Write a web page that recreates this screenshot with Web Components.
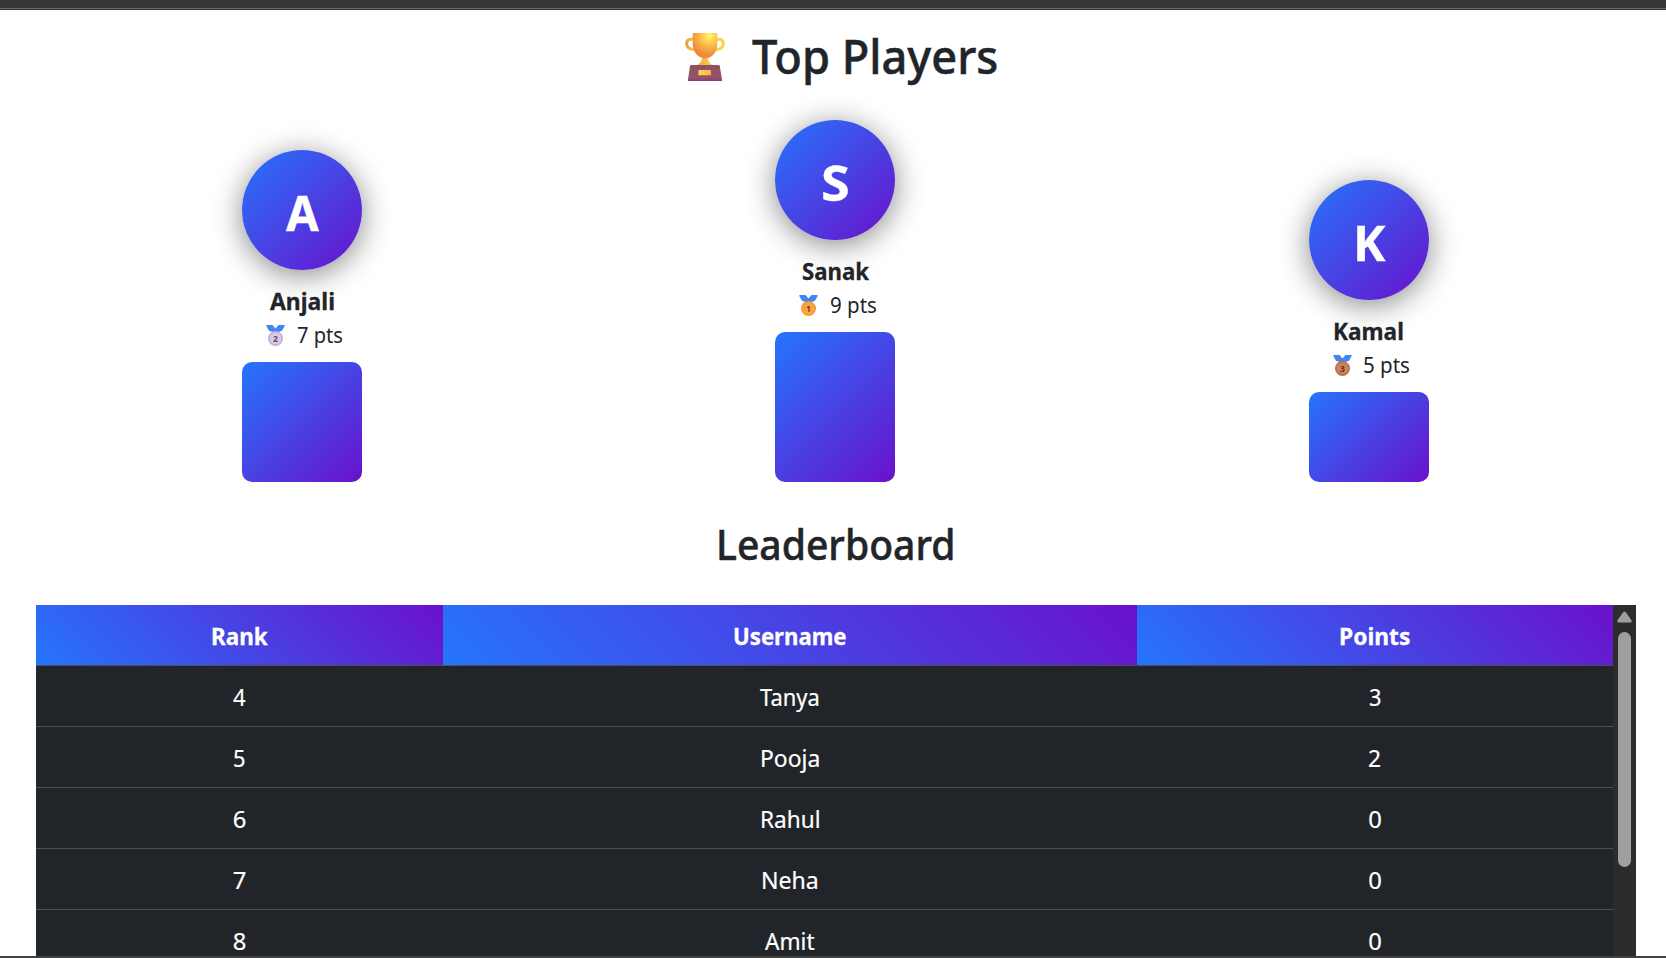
<!DOCTYPE html>
<html lang="en">
<head>
<meta charset="utf-8">
<title>Top Players</title>
<style>
html,body{margin:0;height:100%;overflow:hidden;background:#fff}
body{font-family:"Noto Sans","Open Sans",sans-serif;color:#212529}
</style>
</head>
<body>
<leader-app></leader-app>
<script>
const define = (name, html, setup) => {
  const t = document.createElement('template');
  t.innerHTML = html;
  customElements.define(name, class extends HTMLElement {
    constructor() {
      super();
      this.attachShadow({ mode: 'open' }).append(t.content.cloneNode(true));
    }
    connectedCallback() { if (setup) setup(this, this.shadowRoot); }
  });
};

// Text condensed horizontally so that its inked width equals the "w" attribute.
define('fit-text', `<style>
:host{display:inline-block;white-space:nowrap;text-align:left}
span{display:inline-block;transform-origin:0 50%}
</style><span><slot></slot></span>`, (el, root) => {
  const span = root.querySelector('span'), cs = getComputedStyle(el);
  const ctx = document.createElement('canvas').getContext('2d');
  ctx.font = `${cs.fontWeight} ${cs.fontSize} ${cs.fontFamily}`;
  const m = ctx.measureText(el.textContent);
  const k = Number(el.getAttribute('w')) / (m.actualBoundingBoxRight + m.actualBoundingBoxLeft);
  el.style.width = m.width * k + 'px';
  span.style.transform = `scaleX(${k})`;
});

define('trophy-icon', `<style>:host{display:block;width:40px;height:48px}svg{display:block}</style>
<svg width="40" height="48" viewBox="0 0 40 48">
<defs>
<radialGradient id="c" cx=".68" cy=".12" r=".95"><stop offset="0" stop-color="#fff76b"/><stop offset=".4" stop-color="#fbbc48"/><stop offset=".8" stop-color="#ed8b3b"/></radialGradient>
<linearGradient id="l"><stop offset="0" stop-color="#eda03a"/><stop offset="1" stop-color="#ffd84f"/></linearGradient>
<linearGradient id="b" x2="0" y2="1"><stop offset="0" stop-color="#8c5163"/><stop offset=".75" stop-color="#965367"/><stop offset="1" stop-color="#8a3f79"/></linearGradient>
<linearGradient id="p"><stop offset="0" stop-color="#ffd65a"/><stop offset="1" stop-color="#f6b443"/></linearGradient>
</defs>
<path d="M10 7.200C5 4.700 1.500 7 1.700 11c.3 4 4.500 6.300 9.500 5.700" fill="none" stroke="url(#l)" stroke-width="3"/>
<path d="M30 7.200c5-2.500 8.500-.200 8.300 3.800-.3 4-4.500 6.300-9.500 5.700" fill="none" stroke="#ffce4a" stroke-width="3"/>
<path d="M17.300 23h5.400c0 5.500 2.300 7.500 6 9.500H11.500c3.500-2 5.800-4 5.800-9.500z" fill="url(#l)"/>
<path d="M8.500 0h23q.800 0 .8.800V11c0 8-5.300 14.300-12.200 14.300S7.700 19 7.700 11V.8Q7.700 0 8.500 0z" fill="url(#c)"/>
<path d="M6.300 32h27.200q1 0 1.300 1l2.400 15H2.800L5 33q.200-1 1.300-1z" fill="url(#b)"/>
<rect x="13.500" y="37" width="12.500" height="5.300" rx=".5" fill="url(#p)"/>
</svg>`);

define('medal-icon', `<style>:host{display:block;width:19px;height:21px}svg{display:block}
text{font:700 8.500px "Noto Sans",sans-serif;text-anchor:middle}</style>
<svg width="19" height="21" viewBox="0 0 19 21">
<path d="M1 0h6.200l2.300 2.300L11.800 0H18q1 0 .7 1L16 5.700 12.500 7h-6L3 5.700.3 1Q0 0 1 0z" fill="#3f86ee"/>
<path d="M6.500 0h6L9.500 3.400z" fill="#fff"/>
<circle class="rim" cx="9.500" cy="13.500" r="7.500"/><circle class="face" cx="9.500" cy="13.300" r="5.900"/>
<text x="9.500" y="16.600"></text></svg>`, (el, root) => {
  const place = el.getAttribute('place');
  const [rim, face, ink] = { 1: ['#f39a3c', '#fba53b', '#6c3741'], 2: ['#c3aed4', '#dac9e6', '#594a65'], 3: ['#b9704f', '#cb8359', '#6c3036'] }[place];
  root.querySelector('.rim').setAttribute('fill', rim);
  root.querySelector('.face').setAttribute('fill', face);
  const t = root.querySelector('text');
  t.textContent = place; t.setAttribute('fill', ink);
});

define('podium-place', `<style>
:host{display:flex;flex-direction:column;align-items:center;justify-content:flex-end}
.avatar{width:120px;height:120px;border-radius:50%;background:linear-gradient(135deg,#2575fc,#6a11cb);box-shadow:0 5px 30px rgba(0,0,0,.47);color:#fff;font-size:48px;font-weight:700;display:flex;justify-content:center;line-height:126px}
.avatar,.name{-webkit-text-stroke:.3px}
.name{font-size:23.500px;font-weight:700;line-height:32px;margin-top:15px;height:35px}
.score{display:flex;height:42px;line-height:28px;font-size:22px;gap:11.500px;padding-left:5px;box-sizing:border-box}
medal-icon{margin-top:5px}
.step{width:120px;border-radius:10px;background:linear-gradient(135deg,#2575fc,#6a11cb)}
</style>
<div class="avatar"></div><div class="name"></div><div class="score"></div><div class="step"></div>`, (el, root) => {
  const a = n => el.getAttribute(n), q = s => root.querySelector(s);
  q('.avatar').innerHTML = `<fit-text w="${a('iw')}">${a('name')[0]}</fit-text>`;
  q('.name').innerHTML = `<fit-text w="${a('nw')}">${a('name')}</fit-text>`;
  q('.score').innerHTML = `<medal-icon place="${a('place')}"></medal-icon><fit-text w="45.500">${a('points')} pts</fit-text>`;
  q('.step').style.height = a('step') + 'px';
});

define('score-row', `<style>
:host{display:grid;grid-template-columns:407px 694px 476px;height:61px;box-sizing:border-box;border-bottom:1px solid #4d5154;background:#212529;color:#fff;font-size:23.800px;line-height:63px;text-align:center;-webkit-text-stroke:.2px}
:host([head]){font-weight:700;line-height:62px;-webkit-text-stroke:.3px}
div{height:60px;overflow:hidden}
:host([head]) div{background:linear-gradient(45deg,#2575fc,#6a11cb)}
</style><div></div><div></div><div></div>`, (el, root) => {
  const w = el.getAttribute('widths').split(',');
  el.getAttribute('cells').split(',').forEach((c, i) => {
    root.querySelectorAll('div')[i].innerHTML = `<fit-text w="${w[i]}">${c}</fit-text>`;
  });
});

define('scroll-rail', `<style>
:host{display:flex;flex-direction:column;align-items:center;background:#2c2c2c;width:23px}
svg{display:block;margin-top:6px}
i{display:block;width:13px;height:235px;border-radius:7px;background:#9f9f9f;margin-top:9px}
</style><svg width="15" height="12" viewBox="0 0 15 12"><path d="M6 1.500Q7.500-.500 9 1.500L14.300 9Q15.300 11.500 13 11.600H2Q-.300 11.500.700 9z" fill="#9f9f9f"/></svg><i></i>`);

define('score-table', `<style>
:host{display:flex;overflow:hidden}
section{flex:1}
</style><section><slot></slot></section><scroll-rail></scroll-rail>`);

define('leader-app', `<style>
:host{display:flex;flex-direction:column;height:958px;box-sizing:border-box;overflow:hidden;border-bottom:2px solid #414141}
.bar{height:10px;flex:none;background:linear-gradient(#353535 8px,#666 8px,#666 9px,#353535 9px)}
h1,h2{margin:0;font-weight:500;-webkit-text-stroke:.5px}
h1{display:flex;justify-content:center;height:110px;flex:none;font-size:47px;line-height:92px;gap:27px;padding-left:17px;box-sizing:border-box}
trophy-icon{margin-top:23px}
.podium{display:grid;grid-template-columns:repeat(3,1fr);width:1600px;height:362px;flex:none;margin-left:35.500px}
h2{height:123px;flex:none;font-size:41.500px;line-height:124px;text-align:center;padding-left:5px}
score-table{flex:1;margin:0 30px 0 36px;min-height:0}
</style>
<div class="bar"></div>
<h1><trophy-icon></trophy-icon><fit-text w="244.500">Top Players</fit-text></h1>
<div class="podium">
<podium-place place="2" name="Anjali" points="7" step="120" iw="33.500" nw="64"></podium-place>
<podium-place place="1" name="Sanak" points="9" step="150" iw="25" nw="66.500"></podium-place>
<podium-place place="3" name="Kamal" points="5" step="90" iw="28.500" nw="68"></podium-place>
</div>
<h2><fit-text w="234">Leaderboard</fit-text></h2>
<score-table>
<score-row head cells="Rank,Username,Points" widths="55,111.500,68.500"></score-row>
<score-row cells="4,Tanya,3" widths="13,58.500,11"></score-row>
<score-row cells="5,Pooja,2" widths="11,57,11.500"></score-row>
<score-row cells="6,Rahul,0" widths="12,57.500,12"></score-row>
<score-row cells="7,Neha,0" widths="12,54.500,12"></score-row>
<score-row cells="8,Amit,0" widths="12,50,12"></score-row>
</score-table>`);
</script>
</body>
</html>
